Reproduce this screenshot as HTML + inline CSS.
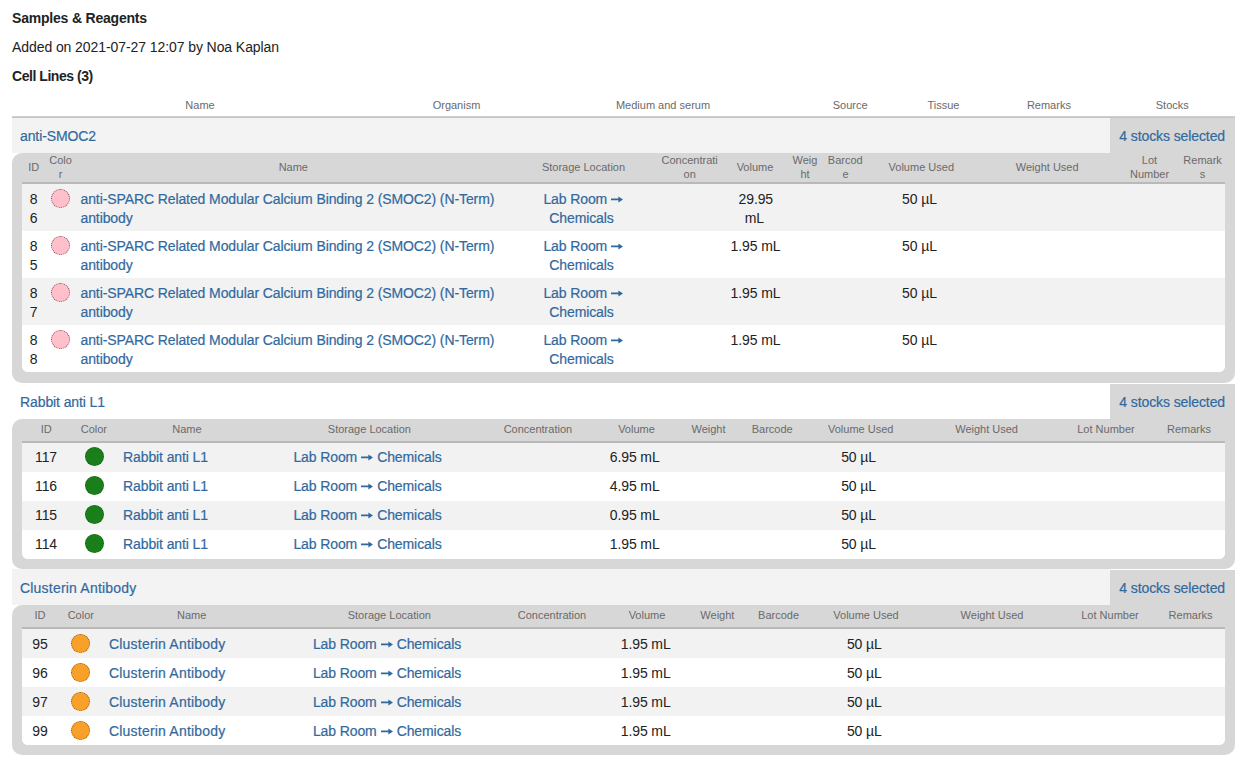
<!DOCTYPE html>
<html><head><meta charset="utf-8"><title>Samples &amp; Reagents</title>
<style>
html,body{margin:0;padding:0;background:#fff;width:1250px;height:766px;overflow:hidden;}
body{position:relative;font-family:"Liberation Sans", sans-serif;}
body>div{position:absolute;}
.t{white-space:nowrap;-webkit-text-stroke:0.2px currentColor;}
</style></head><body>
<div class="t" style="left:12px;top:8.45px;font-size:14px;line-height:20px;color:#222;font-weight:700;letter-spacing:-0.2px;-webkit-text-stroke:0;">Samples &amp; Reagents</div>
<div class="t" style="left:12px;top:37.15px;font-size:14px;line-height:20px;color:#222;font-weight:400;letter-spacing:-0.08px;-webkit-text-stroke:0;">Added on 2021-07-27 12:07 by Noa Kaplan</div>
<div class="t" style="left:12px;top:66.15px;font-size:14px;line-height:20px;color:#222;font-weight:700;letter-spacing:-0.45px;-webkit-text-stroke:0;">Cell Lines (3)</div>
<div class="t" style="left:50.00px;width:300px;text-align:center;top:97.09px;font-size:11px;line-height:17px;color:#6a6a6a;font-weight:400;-webkit-text-stroke:0;">Name</div>
<div class="t" style="left:306.50px;width:300px;text-align:center;top:97.09px;font-size:11px;line-height:17px;color:#6a6a6a;font-weight:400;-webkit-text-stroke:0;">Organism</div>
<div class="t" style="left:513.00px;width:300px;text-align:center;top:97.09px;font-size:11px;line-height:17px;color:#6a6a6a;font-weight:400;-webkit-text-stroke:0;">Medium and serum</div>
<div class="t" style="left:700.20px;width:300px;text-align:center;top:97.09px;font-size:11px;line-height:17px;color:#6a6a6a;font-weight:400;-webkit-text-stroke:0;">Source</div>
<div class="t" style="left:793.40px;width:300px;text-align:center;top:97.09px;font-size:11px;line-height:17px;color:#6a6a6a;font-weight:400;-webkit-text-stroke:0;">Tissue</div>
<div class="t" style="left:898.90px;width:300px;text-align:center;top:97.09px;font-size:11px;line-height:17px;color:#6a6a6a;font-weight:400;-webkit-text-stroke:0;">Remarks</div>
<div class="t" style="left:1022.30px;width:300px;text-align:center;top:97.09px;font-size:11px;line-height:17px;color:#6a6a6a;font-weight:400;-webkit-text-stroke:0;">Stocks</div>
<div style="left:12px;top:117px;width:1098px;height:36px;background:#f3f3f3;"></div>
<div style="left:1110px;top:117px;width:125px;height:36px;background:#d7d7d7;"></div>
<div class="t" style="left:20px;top:126.45px;font-size:14px;line-height:20px;color:#31699e;font-weight:400;letter-spacing:-0.1px;">anti-SMOC2</div>
<div class="t" style="left:925.00px;width:300px;text-align:right;top:125.95px;font-size:14px;line-height:20px;color:#31699e;font-weight:400;letter-spacing:-0.1px;">4 stocks selected</div>
<div style="left:12px;top:153px;width:1223px;height:230px;background:#d7d7d7;border-radius:10px 0 10px 10px;"></div>
<div style="left:21.5px;top:182px;width:1203.5px;height:190px;border-top:2px solid #b9b9b9;box-sizing:border-box;border-radius:0 0 6px 6px;overflow:hidden;background:#fff"><div style="position:absolute;left:0;right:0;top:0px;height:47px;background:#f2f2f2"></div><div style="position:absolute;left:0;right:0;top:47px;height:47px;background:#fff"></div><div style="position:absolute;left:0;right:0;top:94px;height:47px;background:#f2f2f2"></div><div style="position:absolute;left:0;right:0;top:141px;height:47px;background:#fff"></div></div>
<div class="t" style="left:-116.30px;width:300px;text-align:center;top:158.99px;font-size:11px;line-height:17px;color:#6a6a6a;font-weight:400;-webkit-text-stroke:0;">ID</div>
<div class="t" style="left:-89.50px;width:300px;text-align:center;top:151.69px;font-size:11px;line-height:17px;color:#6a6a6a;font-weight:400;-webkit-text-stroke:0;">Colo</div>
<div class="t" style="left:-89.50px;width:300px;text-align:center;top:166.19px;font-size:11px;line-height:17px;color:#6a6a6a;font-weight:400;-webkit-text-stroke:0;">r</div>
<div class="t" style="left:143.30px;width:300px;text-align:center;top:158.99px;font-size:11px;line-height:17px;color:#6a6a6a;font-weight:400;-webkit-text-stroke:0;">Name</div>
<div class="t" style="left:433.50px;width:300px;text-align:center;top:158.99px;font-size:11px;line-height:17px;color:#6a6a6a;font-weight:400;-webkit-text-stroke:0;">Storage Location</div>
<div class="t" style="left:539.70px;width:300px;text-align:center;top:151.69px;font-size:11px;line-height:17px;color:#6a6a6a;font-weight:400;-webkit-text-stroke:0;">Concentrati</div>
<div class="t" style="left:539.70px;width:300px;text-align:center;top:166.19px;font-size:11px;line-height:17px;color:#6a6a6a;font-weight:400;-webkit-text-stroke:0;">on</div>
<div class="t" style="left:605.00px;width:300px;text-align:center;top:158.99px;font-size:11px;line-height:17px;color:#6a6a6a;font-weight:400;-webkit-text-stroke:0;">Volume</div>
<div class="t" style="left:655.00px;width:300px;text-align:center;top:151.69px;font-size:11px;line-height:17px;color:#6a6a6a;font-weight:400;-webkit-text-stroke:0;">Weig</div>
<div class="t" style="left:655.00px;width:300px;text-align:center;top:166.19px;font-size:11px;line-height:17px;color:#6a6a6a;font-weight:400;-webkit-text-stroke:0;">ht</div>
<div class="t" style="left:695.30px;width:300px;text-align:center;top:151.69px;font-size:11px;line-height:17px;color:#6a6a6a;font-weight:400;-webkit-text-stroke:0;">Barcod</div>
<div class="t" style="left:695.60px;width:300px;text-align:center;top:166.19px;font-size:11px;line-height:17px;color:#6a6a6a;font-weight:400;-webkit-text-stroke:0;">e</div>
<div class="t" style="left:771.30px;width:300px;text-align:center;top:158.99px;font-size:11px;line-height:17px;color:#6a6a6a;font-weight:400;-webkit-text-stroke:0;">Volume Used</div>
<div class="t" style="left:897.20px;width:300px;text-align:center;top:158.99px;font-size:11px;line-height:17px;color:#6a6a6a;font-weight:400;-webkit-text-stroke:0;">Weight Used</div>
<div class="t" style="left:999.50px;width:300px;text-align:center;top:151.69px;font-size:11px;line-height:17px;color:#6a6a6a;font-weight:400;-webkit-text-stroke:0;">Lot</div>
<div class="t" style="left:999.50px;width:300px;text-align:center;top:166.19px;font-size:11px;line-height:17px;color:#6a6a6a;font-weight:400;-webkit-text-stroke:0;">Number</div>
<div class="t" style="left:1052.60px;width:300px;text-align:center;top:151.69px;font-size:11px;line-height:17px;color:#6a6a6a;font-weight:400;-webkit-text-stroke:0;">Remark</div>
<div class="t" style="left:1052.60px;width:300px;text-align:center;top:166.19px;font-size:11px;line-height:17px;color:#6a6a6a;font-weight:400;-webkit-text-stroke:0;">s</div>
<div class="t" style="left:-116.30px;width:300px;text-align:center;top:188.75px;font-size:14px;line-height:20px;color:#222;font-weight:400;letter-spacing:-0.1px;-webkit-text-stroke:0;">8</div>
<div class="t" style="left:-116.30px;width:300px;text-align:center;top:208.15px;font-size:14px;line-height:20px;color:#222;font-weight:400;letter-spacing:-0.1px;-webkit-text-stroke:0;">6</div>
<div style="left:51.00px;top:188.90px;width:19px;height:19px;box-sizing:border-box;border-radius:50%;background:#ffc0cb;border:1px dotted #8a4a58"></div>
<div class="t" style="left:80.5px;top:188.75px;font-size:14px;line-height:20px;color:#31699e;font-weight:400;letter-spacing:-0.1px;">anti-SPARC Related Modular Calcium Binding 2 (SMOC2) (N-Term)</div>
<div class="t" style="left:80.5px;top:208.15px;font-size:14px;line-height:20px;color:#31699e;font-weight:400;letter-spacing:-0.1px;">antibody</div>
<div class="t" style="left:433.30px;width:300px;text-align:center;top:188.75px;font-size:14px;line-height:20px;color:#31699e;font-weight:400;letter-spacing:-0.1px;">Lab Room<svg width="12" height="8" viewBox="0 0 12 8" style="vertical-align:1px;margin:0 0 0 4px"><path d="M0 3.5h8v1.8H0z M7.4 1.4 L12 4.4 L7.4 7.4z" fill="#31699e"/></svg></div>
<div class="t" style="left:431.50px;width:300px;text-align:center;top:208.15px;font-size:14px;line-height:20px;color:#31699e;font-weight:400;letter-spacing:-0.1px;">Chemicals</div>
<div class="t" style="left:769.50px;width:300px;text-align:center;top:188.75px;font-size:14px;line-height:20px;color:#222;font-weight:400;letter-spacing:-0.1px;-webkit-text-stroke:0;">50 &#181;L</div>
<div class="t" style="left:605.80px;width:300px;text-align:center;top:188.75px;font-size:14px;line-height:20px;color:#222;font-weight:400;letter-spacing:-0.1px;-webkit-text-stroke:0;">29.95</div>
<div class="t" style="left:604.40px;width:300px;text-align:center;top:208.15px;font-size:14px;line-height:20px;color:#222;font-weight:400;letter-spacing:-0.1px;-webkit-text-stroke:0;">mL</div>
<div class="t" style="left:-116.30px;width:300px;text-align:center;top:235.75px;font-size:14px;line-height:20px;color:#222;font-weight:400;letter-spacing:-0.1px;-webkit-text-stroke:0;">8</div>
<div class="t" style="left:-116.30px;width:300px;text-align:center;top:255.15px;font-size:14px;line-height:20px;color:#222;font-weight:400;letter-spacing:-0.1px;-webkit-text-stroke:0;">5</div>
<div style="left:51.00px;top:235.90px;width:19px;height:19px;box-sizing:border-box;border-radius:50%;background:#ffc0cb;border:1px dotted #8a4a58"></div>
<div class="t" style="left:80.5px;top:235.75px;font-size:14px;line-height:20px;color:#31699e;font-weight:400;letter-spacing:-0.1px;">anti-SPARC Related Modular Calcium Binding 2 (SMOC2) (N-Term)</div>
<div class="t" style="left:80.5px;top:255.15px;font-size:14px;line-height:20px;color:#31699e;font-weight:400;letter-spacing:-0.1px;">antibody</div>
<div class="t" style="left:433.30px;width:300px;text-align:center;top:235.75px;font-size:14px;line-height:20px;color:#31699e;font-weight:400;letter-spacing:-0.1px;">Lab Room<svg width="12" height="8" viewBox="0 0 12 8" style="vertical-align:1px;margin:0 0 0 4px"><path d="M0 3.5h8v1.8H0z M7.4 1.4 L12 4.4 L7.4 7.4z" fill="#31699e"/></svg></div>
<div class="t" style="left:431.50px;width:300px;text-align:center;top:255.15px;font-size:14px;line-height:20px;color:#31699e;font-weight:400;letter-spacing:-0.1px;">Chemicals</div>
<div class="t" style="left:769.50px;width:300px;text-align:center;top:235.75px;font-size:14px;line-height:20px;color:#222;font-weight:400;letter-spacing:-0.1px;-webkit-text-stroke:0;">50 &#181;L</div>
<div class="t" style="left:605.50px;width:300px;text-align:center;top:235.75px;font-size:14px;line-height:20px;color:#222;font-weight:400;letter-spacing:-0.1px;-webkit-text-stroke:0;">1.95 mL</div>
<div class="t" style="left:-116.30px;width:300px;text-align:center;top:282.75px;font-size:14px;line-height:20px;color:#222;font-weight:400;letter-spacing:-0.1px;-webkit-text-stroke:0;">8</div>
<div class="t" style="left:-116.30px;width:300px;text-align:center;top:302.15px;font-size:14px;line-height:20px;color:#222;font-weight:400;letter-spacing:-0.1px;-webkit-text-stroke:0;">7</div>
<div style="left:51.00px;top:282.90px;width:19px;height:19px;box-sizing:border-box;border-radius:50%;background:#ffc0cb;border:1px dotted #8a4a58"></div>
<div class="t" style="left:80.5px;top:282.75px;font-size:14px;line-height:20px;color:#31699e;font-weight:400;letter-spacing:-0.1px;">anti-SPARC Related Modular Calcium Binding 2 (SMOC2) (N-Term)</div>
<div class="t" style="left:80.5px;top:302.15px;font-size:14px;line-height:20px;color:#31699e;font-weight:400;letter-spacing:-0.1px;">antibody</div>
<div class="t" style="left:433.30px;width:300px;text-align:center;top:282.75px;font-size:14px;line-height:20px;color:#31699e;font-weight:400;letter-spacing:-0.1px;">Lab Room<svg width="12" height="8" viewBox="0 0 12 8" style="vertical-align:1px;margin:0 0 0 4px"><path d="M0 3.5h8v1.8H0z M7.4 1.4 L12 4.4 L7.4 7.4z" fill="#31699e"/></svg></div>
<div class="t" style="left:431.50px;width:300px;text-align:center;top:302.15px;font-size:14px;line-height:20px;color:#31699e;font-weight:400;letter-spacing:-0.1px;">Chemicals</div>
<div class="t" style="left:769.50px;width:300px;text-align:center;top:282.75px;font-size:14px;line-height:20px;color:#222;font-weight:400;letter-spacing:-0.1px;-webkit-text-stroke:0;">50 &#181;L</div>
<div class="t" style="left:605.50px;width:300px;text-align:center;top:282.75px;font-size:14px;line-height:20px;color:#222;font-weight:400;letter-spacing:-0.1px;-webkit-text-stroke:0;">1.95 mL</div>
<div class="t" style="left:-116.30px;width:300px;text-align:center;top:329.75px;font-size:14px;line-height:20px;color:#222;font-weight:400;letter-spacing:-0.1px;-webkit-text-stroke:0;">8</div>
<div class="t" style="left:-116.30px;width:300px;text-align:center;top:349.15px;font-size:14px;line-height:20px;color:#222;font-weight:400;letter-spacing:-0.1px;-webkit-text-stroke:0;">8</div>
<div style="left:51.00px;top:329.90px;width:19px;height:19px;box-sizing:border-box;border-radius:50%;background:#ffc0cb;border:1px dotted #8a4a58"></div>
<div class="t" style="left:80.5px;top:329.75px;font-size:14px;line-height:20px;color:#31699e;font-weight:400;letter-spacing:-0.1px;">anti-SPARC Related Modular Calcium Binding 2 (SMOC2) (N-Term)</div>
<div class="t" style="left:80.5px;top:349.15px;font-size:14px;line-height:20px;color:#31699e;font-weight:400;letter-spacing:-0.1px;">antibody</div>
<div class="t" style="left:433.30px;width:300px;text-align:center;top:329.75px;font-size:14px;line-height:20px;color:#31699e;font-weight:400;letter-spacing:-0.1px;">Lab Room<svg width="12" height="8" viewBox="0 0 12 8" style="vertical-align:1px;margin:0 0 0 4px"><path d="M0 3.5h8v1.8H0z M7.4 1.4 L12 4.4 L7.4 7.4z" fill="#31699e"/></svg></div>
<div class="t" style="left:431.50px;width:300px;text-align:center;top:349.15px;font-size:14px;line-height:20px;color:#31699e;font-weight:400;letter-spacing:-0.1px;">Chemicals</div>
<div class="t" style="left:769.50px;width:300px;text-align:center;top:329.75px;font-size:14px;line-height:20px;color:#222;font-weight:400;letter-spacing:-0.1px;-webkit-text-stroke:0;">50 &#181;L</div>
<div class="t" style="left:605.50px;width:300px;text-align:center;top:329.75px;font-size:14px;line-height:20px;color:#222;font-weight:400;letter-spacing:-0.1px;-webkit-text-stroke:0;">1.95 mL</div>
<div style="left:12px;top:117px;width:1223px;height:0"></div>
<div style="left:1110px;top:384px;width:125px;height:35px;background:#d7d7d7;"></div>
<div class="t" style="left:20px;top:392.45px;font-size:14px;line-height:20px;color:#31699e;font-weight:400;letter-spacing:-0.1px;">Rabbit anti L1</div>
<div class="t" style="left:925.00px;width:300px;text-align:right;top:391.95px;font-size:14px;line-height:20px;color:#31699e;font-weight:400;letter-spacing:-0.1px;">4 stocks selected</div>
<div style="left:12px;top:419px;width:1223px;height:150px;background:#d7d7d7;border-radius:10px 0 10px 10px;"></div>
<div style="left:21.5px;top:441px;width:1203.5px;height:118px;border-top:2px solid #b9b9b9;box-sizing:border-box;border-radius:0 0 6px 6px;overflow:hidden;background:#fff"><div style="position:absolute;left:0;right:0;top:0px;height:29px;background:#f2f2f2"></div><div style="position:absolute;left:0;right:0;top:29px;height:29px;background:#fff"></div><div style="position:absolute;left:0;right:0;top:58px;height:29px;background:#f2f2f2"></div><div style="position:absolute;left:0;right:0;top:87px;height:29px;background:#fff"></div></div>
<div class="t" style="left:-103.80px;width:300px;text-align:center;top:420.99px;font-size:11px;line-height:17px;color:#6a6a6a;font-weight:400;-webkit-text-stroke:0;">ID</div>
<div class="t" style="left:-56.10px;width:300px;text-align:center;top:420.99px;font-size:11px;line-height:17px;color:#6a6a6a;font-weight:400;-webkit-text-stroke:0;">Color</div>
<div class="t" style="left:36.90px;width:300px;text-align:center;top:420.99px;font-size:11px;line-height:17px;color:#6a6a6a;font-weight:400;-webkit-text-stroke:0;">Name</div>
<div class="t" style="left:219.40px;width:300px;text-align:center;top:420.99px;font-size:11px;line-height:17px;color:#6a6a6a;font-weight:400;-webkit-text-stroke:0;">Storage Location</div>
<div class="t" style="left:387.90px;width:300px;text-align:center;top:420.99px;font-size:11px;line-height:17px;color:#6a6a6a;font-weight:400;-webkit-text-stroke:0;">Concentration</div>
<div class="t" style="left:486.50px;width:300px;text-align:center;top:420.99px;font-size:11px;line-height:17px;color:#6a6a6a;font-weight:400;-webkit-text-stroke:0;">Volume</div>
<div class="t" style="left:558.50px;width:300px;text-align:center;top:420.99px;font-size:11px;line-height:17px;color:#6a6a6a;font-weight:400;-webkit-text-stroke:0;">Weight</div>
<div class="t" style="left:622.20px;width:300px;text-align:center;top:420.99px;font-size:11px;line-height:17px;color:#6a6a6a;font-weight:400;-webkit-text-stroke:0;">Barcode</div>
<div class="t" style="left:710.70px;width:300px;text-align:center;top:420.99px;font-size:11px;line-height:17px;color:#6a6a6a;font-weight:400;-webkit-text-stroke:0;">Volume Used</div>
<div class="t" style="left:836.60px;width:300px;text-align:center;top:420.99px;font-size:11px;line-height:17px;color:#6a6a6a;font-weight:400;-webkit-text-stroke:0;">Weight Used</div>
<div class="t" style="left:956.00px;width:300px;text-align:center;top:420.99px;font-size:11px;line-height:17px;color:#6a6a6a;font-weight:400;-webkit-text-stroke:0;">Lot Number</div>
<div class="t" style="left:1039.00px;width:300px;text-align:center;top:420.99px;font-size:11px;line-height:17px;color:#6a6a6a;font-weight:400;-webkit-text-stroke:0;">Remarks</div>
<div class="t" style="left:-104.00px;width:300px;text-align:center;top:447.45px;font-size:14px;line-height:20px;color:#222;font-weight:400;letter-spacing:-0.1px;-webkit-text-stroke:0;">117</div>
<div style="left:84.50px;top:447.20px;width:19px;height:19px;box-sizing:border-box;border-radius:50%;background:#1a7f1a;border:1px dotted #0e5e0e"></div>
<div class="t" style="left:123px;top:447.45px;font-size:14px;line-height:20px;color:#31699e;font-weight:400;letter-spacing:-0.1px;">Rabbit anti L1</div>
<div class="t" style="left:217.50px;width:300px;text-align:center;top:447.45px;font-size:14px;line-height:20px;color:#31699e;font-weight:400;letter-spacing:-0.1px;">Lab Room<svg width="12" height="8" viewBox="0 0 12 8" style="vertical-align:1px;margin:0 4px"><path d="M0 3.5h8v1.8H0z M7.4 1.4 L12 4.4 L7.4 7.4z" fill="#31699e"/></svg>Chemicals</div>
<div class="t" style="left:484.70px;width:300px;text-align:center;top:447.45px;font-size:14px;line-height:20px;color:#222;font-weight:400;letter-spacing:-0.1px;-webkit-text-stroke:0;">6.95 mL</div>
<div class="t" style="left:708.60px;width:300px;text-align:center;top:447.45px;font-size:14px;line-height:20px;color:#222;font-weight:400;letter-spacing:-0.1px;-webkit-text-stroke:0;">50 &#181;L</div>
<div class="t" style="left:-104.00px;width:300px;text-align:center;top:476.45px;font-size:14px;line-height:20px;color:#222;font-weight:400;letter-spacing:-0.1px;-webkit-text-stroke:0;">116</div>
<div style="left:84.50px;top:476.20px;width:19px;height:19px;box-sizing:border-box;border-radius:50%;background:#1a7f1a;border:1px dotted #0e5e0e"></div>
<div class="t" style="left:123px;top:476.45px;font-size:14px;line-height:20px;color:#31699e;font-weight:400;letter-spacing:-0.1px;">Rabbit anti L1</div>
<div class="t" style="left:217.50px;width:300px;text-align:center;top:476.45px;font-size:14px;line-height:20px;color:#31699e;font-weight:400;letter-spacing:-0.1px;">Lab Room<svg width="12" height="8" viewBox="0 0 12 8" style="vertical-align:1px;margin:0 4px"><path d="M0 3.5h8v1.8H0z M7.4 1.4 L12 4.4 L7.4 7.4z" fill="#31699e"/></svg>Chemicals</div>
<div class="t" style="left:484.70px;width:300px;text-align:center;top:476.45px;font-size:14px;line-height:20px;color:#222;font-weight:400;letter-spacing:-0.1px;-webkit-text-stroke:0;">4.95 mL</div>
<div class="t" style="left:708.60px;width:300px;text-align:center;top:476.45px;font-size:14px;line-height:20px;color:#222;font-weight:400;letter-spacing:-0.1px;-webkit-text-stroke:0;">50 &#181;L</div>
<div class="t" style="left:-104.00px;width:300px;text-align:center;top:505.45px;font-size:14px;line-height:20px;color:#222;font-weight:400;letter-spacing:-0.1px;-webkit-text-stroke:0;">115</div>
<div style="left:84.50px;top:505.20px;width:19px;height:19px;box-sizing:border-box;border-radius:50%;background:#1a7f1a;border:1px dotted #0e5e0e"></div>
<div class="t" style="left:123px;top:505.45px;font-size:14px;line-height:20px;color:#31699e;font-weight:400;letter-spacing:-0.1px;">Rabbit anti L1</div>
<div class="t" style="left:217.50px;width:300px;text-align:center;top:505.45px;font-size:14px;line-height:20px;color:#31699e;font-weight:400;letter-spacing:-0.1px;">Lab Room<svg width="12" height="8" viewBox="0 0 12 8" style="vertical-align:1px;margin:0 4px"><path d="M0 3.5h8v1.8H0z M7.4 1.4 L12 4.4 L7.4 7.4z" fill="#31699e"/></svg>Chemicals</div>
<div class="t" style="left:484.70px;width:300px;text-align:center;top:505.45px;font-size:14px;line-height:20px;color:#222;font-weight:400;letter-spacing:-0.1px;-webkit-text-stroke:0;">0.95 mL</div>
<div class="t" style="left:708.60px;width:300px;text-align:center;top:505.45px;font-size:14px;line-height:20px;color:#222;font-weight:400;letter-spacing:-0.1px;-webkit-text-stroke:0;">50 &#181;L</div>
<div class="t" style="left:-104.00px;width:300px;text-align:center;top:534.45px;font-size:14px;line-height:20px;color:#222;font-weight:400;letter-spacing:-0.1px;-webkit-text-stroke:0;">114</div>
<div style="left:84.50px;top:534.20px;width:19px;height:19px;box-sizing:border-box;border-radius:50%;background:#1a7f1a;border:1px dotted #0e5e0e"></div>
<div class="t" style="left:123px;top:534.45px;font-size:14px;line-height:20px;color:#31699e;font-weight:400;letter-spacing:-0.1px;">Rabbit anti L1</div>
<div class="t" style="left:217.50px;width:300px;text-align:center;top:534.45px;font-size:14px;line-height:20px;color:#31699e;font-weight:400;letter-spacing:-0.1px;">Lab Room<svg width="12" height="8" viewBox="0 0 12 8" style="vertical-align:1px;margin:0 4px"><path d="M0 3.5h8v1.8H0z M7.4 1.4 L12 4.4 L7.4 7.4z" fill="#31699e"/></svg>Chemicals</div>
<div class="t" style="left:484.70px;width:300px;text-align:center;top:534.45px;font-size:14px;line-height:20px;color:#222;font-weight:400;letter-spacing:-0.1px;-webkit-text-stroke:0;">1.95 mL</div>
<div class="t" style="left:708.60px;width:300px;text-align:center;top:534.45px;font-size:14px;line-height:20px;color:#222;font-weight:400;letter-spacing:-0.1px;-webkit-text-stroke:0;">50 &#181;L</div>
<div style="left:12px;top:383px;width:1223px;height:0"></div>
<div style="left:12px;top:569px;width:1098px;height:36px;background:#f3f3f3;"></div>
<div style="left:1110px;top:570px;width:125px;height:35px;background:#d7d7d7;"></div>
<div class="t" style="left:20px;top:578.45px;font-size:14px;line-height:20px;color:#31699e;font-weight:400;letter-spacing:0.2px;">Clusterin Antibody</div>
<div class="t" style="left:925.00px;width:300px;text-align:right;top:577.95px;font-size:14px;line-height:20px;color:#31699e;font-weight:400;letter-spacing:-0.1px;">4 stocks selected</div>
<div style="left:12px;top:605px;width:1223px;height:150px;background:#d7d7d7;border-radius:10px 0 10px 10px;"></div>
<div style="left:21.5px;top:627px;width:1203.5px;height:118px;border-top:2px solid #b9b9b9;box-sizing:border-box;border-radius:0 0 6px 6px;overflow:hidden;background:#fff"><div style="position:absolute;left:0;right:0;top:0px;height:29px;background:#f2f2f2"></div><div style="position:absolute;left:0;right:0;top:29px;height:29px;background:#fff"></div><div style="position:absolute;left:0;right:0;top:58px;height:29px;background:#f2f2f2"></div><div style="position:absolute;left:0;right:0;top:87px;height:29px;background:#fff"></div></div>
<div class="t" style="left:-110.00px;width:300px;text-align:center;top:606.69px;font-size:11px;line-height:17px;color:#6a6a6a;font-weight:400;-webkit-text-stroke:0;">ID</div>
<div class="t" style="left:-69.20px;width:300px;text-align:center;top:606.69px;font-size:11px;line-height:17px;color:#6a6a6a;font-weight:400;-webkit-text-stroke:0;">Color</div>
<div class="t" style="left:41.70px;width:300px;text-align:center;top:606.69px;font-size:11px;line-height:17px;color:#6a6a6a;font-weight:400;-webkit-text-stroke:0;">Name</div>
<div class="t" style="left:239.30px;width:300px;text-align:center;top:606.69px;font-size:11px;line-height:17px;color:#6a6a6a;font-weight:400;-webkit-text-stroke:0;">Storage Location</div>
<div class="t" style="left:402.00px;width:300px;text-align:center;top:606.69px;font-size:11px;line-height:17px;color:#6a6a6a;font-weight:400;-webkit-text-stroke:0;">Concentration</div>
<div class="t" style="left:497.00px;width:300px;text-align:center;top:606.69px;font-size:11px;line-height:17px;color:#6a6a6a;font-weight:400;-webkit-text-stroke:0;">Volume</div>
<div class="t" style="left:567.40px;width:300px;text-align:center;top:606.69px;font-size:11px;line-height:17px;color:#6a6a6a;font-weight:400;-webkit-text-stroke:0;">Weight</div>
<div class="t" style="left:628.60px;width:300px;text-align:center;top:606.69px;font-size:11px;line-height:17px;color:#6a6a6a;font-weight:400;-webkit-text-stroke:0;">Barcode</div>
<div class="t" style="left:716.00px;width:300px;text-align:center;top:606.69px;font-size:11px;line-height:17px;color:#6a6a6a;font-weight:400;-webkit-text-stroke:0;">Volume Used</div>
<div class="t" style="left:842.00px;width:300px;text-align:center;top:606.69px;font-size:11px;line-height:17px;color:#6a6a6a;font-weight:400;-webkit-text-stroke:0;">Weight Used</div>
<div class="t" style="left:960.00px;width:300px;text-align:center;top:606.69px;font-size:11px;line-height:17px;color:#6a6a6a;font-weight:400;-webkit-text-stroke:0;">Lot Number</div>
<div class="t" style="left:1040.60px;width:300px;text-align:center;top:606.69px;font-size:11px;line-height:17px;color:#6a6a6a;font-weight:400;-webkit-text-stroke:0;">Remarks</div>
<div class="t" style="left:-110.00px;width:300px;text-align:center;top:633.95px;font-size:14px;line-height:20px;color:#222;font-weight:400;letter-spacing:-0.1px;-webkit-text-stroke:0;">95</div>
<div style="left:71.30px;top:633.90px;width:19px;height:19px;box-sizing:border-box;border-radius:50%;background:#f7a12a;border:1px dotted #9a5a08"></div>
<div class="t" style="left:109px;top:633.95px;font-size:14px;line-height:20px;color:#31699e;font-weight:400;letter-spacing:0.2px;">Clusterin Antibody</div>
<div class="t" style="left:237.00px;width:300px;text-align:center;top:633.95px;font-size:14px;line-height:20px;color:#31699e;font-weight:400;letter-spacing:-0.1px;">Lab Room<svg width="12" height="8" viewBox="0 0 12 8" style="vertical-align:1px;margin:0 4px"><path d="M0 3.5h8v1.8H0z M7.4 1.4 L12 4.4 L7.4 7.4z" fill="#31699e"/></svg>Chemicals</div>
<div class="t" style="left:495.70px;width:300px;text-align:center;top:633.95px;font-size:14px;line-height:20px;color:#222;font-weight:400;letter-spacing:-0.1px;-webkit-text-stroke:0;">1.95 mL</div>
<div class="t" style="left:714.30px;width:300px;text-align:center;top:633.95px;font-size:14px;line-height:20px;color:#222;font-weight:400;letter-spacing:-0.1px;-webkit-text-stroke:0;">50 &#181;L</div>
<div class="t" style="left:-110.00px;width:300px;text-align:center;top:662.95px;font-size:14px;line-height:20px;color:#222;font-weight:400;letter-spacing:-0.1px;-webkit-text-stroke:0;">96</div>
<div style="left:71.30px;top:662.90px;width:19px;height:19px;box-sizing:border-box;border-radius:50%;background:#f7a12a;border:1px dotted #9a5a08"></div>
<div class="t" style="left:109px;top:662.95px;font-size:14px;line-height:20px;color:#31699e;font-weight:400;letter-spacing:0.2px;">Clusterin Antibody</div>
<div class="t" style="left:237.00px;width:300px;text-align:center;top:662.95px;font-size:14px;line-height:20px;color:#31699e;font-weight:400;letter-spacing:-0.1px;">Lab Room<svg width="12" height="8" viewBox="0 0 12 8" style="vertical-align:1px;margin:0 4px"><path d="M0 3.5h8v1.8H0z M7.4 1.4 L12 4.4 L7.4 7.4z" fill="#31699e"/></svg>Chemicals</div>
<div class="t" style="left:495.70px;width:300px;text-align:center;top:662.95px;font-size:14px;line-height:20px;color:#222;font-weight:400;letter-spacing:-0.1px;-webkit-text-stroke:0;">1.95 mL</div>
<div class="t" style="left:714.30px;width:300px;text-align:center;top:662.95px;font-size:14px;line-height:20px;color:#222;font-weight:400;letter-spacing:-0.1px;-webkit-text-stroke:0;">50 &#181;L</div>
<div class="t" style="left:-110.00px;width:300px;text-align:center;top:691.95px;font-size:14px;line-height:20px;color:#222;font-weight:400;letter-spacing:-0.1px;-webkit-text-stroke:0;">97</div>
<div style="left:71.30px;top:691.90px;width:19px;height:19px;box-sizing:border-box;border-radius:50%;background:#f7a12a;border:1px dotted #9a5a08"></div>
<div class="t" style="left:109px;top:691.95px;font-size:14px;line-height:20px;color:#31699e;font-weight:400;letter-spacing:0.2px;">Clusterin Antibody</div>
<div class="t" style="left:237.00px;width:300px;text-align:center;top:691.95px;font-size:14px;line-height:20px;color:#31699e;font-weight:400;letter-spacing:-0.1px;">Lab Room<svg width="12" height="8" viewBox="0 0 12 8" style="vertical-align:1px;margin:0 4px"><path d="M0 3.5h8v1.8H0z M7.4 1.4 L12 4.4 L7.4 7.4z" fill="#31699e"/></svg>Chemicals</div>
<div class="t" style="left:495.70px;width:300px;text-align:center;top:691.95px;font-size:14px;line-height:20px;color:#222;font-weight:400;letter-spacing:-0.1px;-webkit-text-stroke:0;">1.95 mL</div>
<div class="t" style="left:714.30px;width:300px;text-align:center;top:691.95px;font-size:14px;line-height:20px;color:#222;font-weight:400;letter-spacing:-0.1px;-webkit-text-stroke:0;">50 &#181;L</div>
<div class="t" style="left:-110.00px;width:300px;text-align:center;top:720.95px;font-size:14px;line-height:20px;color:#222;font-weight:400;letter-spacing:-0.1px;-webkit-text-stroke:0;">99</div>
<div style="left:71.30px;top:720.90px;width:19px;height:19px;box-sizing:border-box;border-radius:50%;background:#f7a12a;border:1px dotted #9a5a08"></div>
<div class="t" style="left:109px;top:720.95px;font-size:14px;line-height:20px;color:#31699e;font-weight:400;letter-spacing:0.2px;">Clusterin Antibody</div>
<div class="t" style="left:237.00px;width:300px;text-align:center;top:720.95px;font-size:14px;line-height:20px;color:#31699e;font-weight:400;letter-spacing:-0.1px;">Lab Room<svg width="12" height="8" viewBox="0 0 12 8" style="vertical-align:1px;margin:0 4px"><path d="M0 3.5h8v1.8H0z M7.4 1.4 L12 4.4 L7.4 7.4z" fill="#31699e"/></svg>Chemicals</div>
<div class="t" style="left:495.70px;width:300px;text-align:center;top:720.95px;font-size:14px;line-height:20px;color:#222;font-weight:400;letter-spacing:-0.1px;-webkit-text-stroke:0;">1.95 mL</div>
<div class="t" style="left:714.30px;width:300px;text-align:center;top:720.95px;font-size:14px;line-height:20px;color:#222;font-weight:400;letter-spacing:-0.1px;-webkit-text-stroke:0;">50 &#181;L</div>
<div style="left:12px;top:569px;width:1223px;height:0"></div>
<div style="left:12px;top:116px;width:1223px;height:2px;background:#cfcfcf;"></div>
<div style="left:12px;top:116.5px;width:1223px;height:1.0px;background:#c4c4c4;"></div>
</body></html>
